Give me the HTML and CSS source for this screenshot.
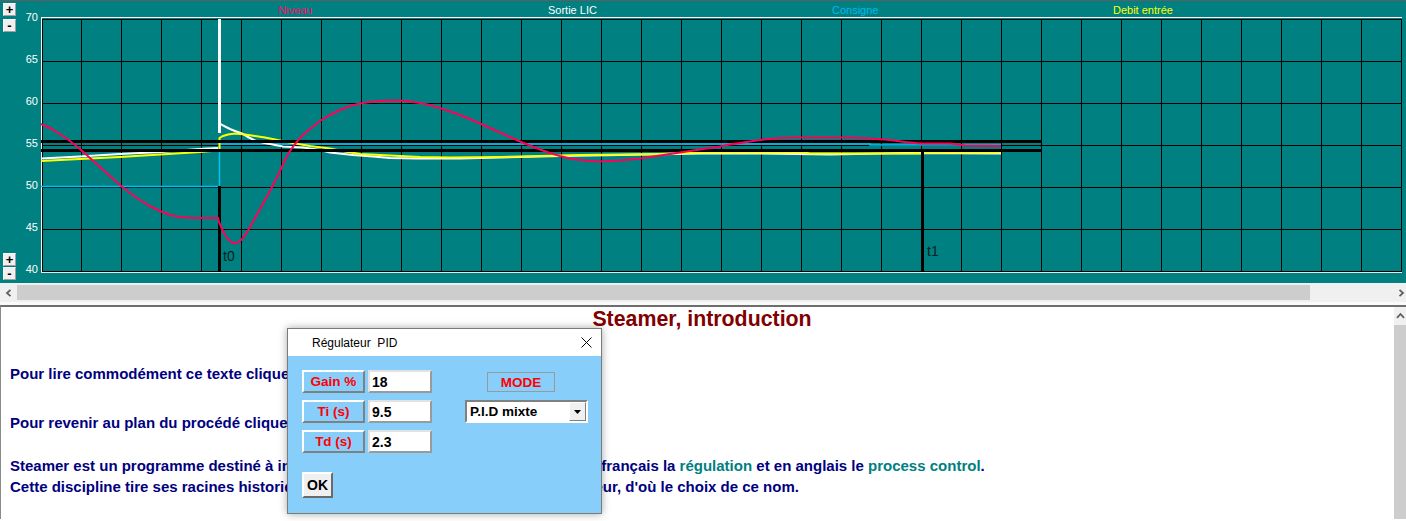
FILE: index.html
```html
<!DOCTYPE html>
<html lang="fr">
<head>
<meta charset="utf-8">
<title>Steamer</title>
<link rel="stylesheet" href="styles.css">
</head>
<body>
<div class="app">
  <div class="chart">
    <svg class="plot" width="1406" height="283" viewBox="0 0 1406 283">
      <defs>
        <pattern id="grid" patternUnits="userSpaceOnUse" x="41" y="19" width="40" height="42">
          <path d="M0.5 0V42M0 0.5H40" stroke="#000" stroke-width="1" fill="none"/>
        </pattern>
      </defs>
      <rect x="0" y="0" width="1406" height="1" fill="#5f5f5f"/>
      <rect x="41" y="19" width="1361" height="253" fill="url(#grid)"/>
      <rect x="41" y="17" width="1361" height="1" fill="#ffffff"/>
      <rect x="41" y="17" width="1" height="256" fill="#ffffff"/>
      <rect x="42" y="19" width="1" height="253" fill="#000"/>
      <rect x="41" y="272" width="1361" height="1" fill="#e8e8e8"/>

      <text class="ylab" x="38" y="21">70</text>
      <text class="ylab" x="38" y="63">65</text>
      <text class="ylab" x="38" y="105">60</text>
      <text class="ylab" x="38" y="147">55</text>
      <text class="ylab" x="38" y="189">50</text>
      <text class="ylab" x="38" y="231">45</text>
      <text class="ylab" x="38" y="273">40</text>

      <text class="leg leg-niveau" x="278" y="14">Niveau</text>
      <text class="leg leg-sortie" x="548" y="14">Sortie LIC</text>
      <text class="leg leg-consigne" x="832" y="14">Consigne</text>
      <text class="leg leg-debit" x="1113" y="14">Debit entrée</text>

      <!-- consigne -->
      <path d="M41 186.5H219.5V140" stroke="#00c0f8" stroke-width="1.5" fill="none"/>
      <path d="M219 144H870V145H1001" stroke="#00c0f8" stroke-width="1.5" fill="none"/>

      <!-- sortie LIC (white) -->
      <rect x="218" y="19" width="3" height="114" fill="#ffffff"/>
      <polyline fill="none" stroke="#ffffff" stroke-width="2" points="41,158.5 80,156.5 120,154 160,152 199,149 218,148"/>
      <polyline fill="none" stroke="#ffffff" stroke-width="2" points="219.5,123 222,125 226,127 230,129 235,131 242,133.5 248,137 256,141 267,143.5 283,146.5 303,147.5 320,150 330,152.5 353,155 373,156.5 390,158 417,158.5 460,158.5 500,157.5 560,156 620,155 700,153.5 760,153.5 830,154.5 905,153 1001,153.5"/>

      <!-- debit entree (yellow) -->
      <polyline fill="none" stroke="#ffff00" stroke-width="2" points="41,161 80,159 120,157 160,154.5 200,152 218,150.5 219.5,150.5 219.5,138 223,136 228,134.5 235,133.5 245,134.5 255,136 265,137.5 275,139.5 285,141.5 295,143.5 310,146 330,148.5 345,151.5 360,154 380,155 400,156 420,157 450,157.5 500,157 540,156 580,155 620,154.5 660,154 700,152.5 805,152.5 810,153.5 905,153.5 922,153.5 924,152.5 1001,152.5"/>

      <!-- markers -->
      <rect x="41" y="140" width="1001" height="3" fill="#000"/>
      <rect x="41" y="149" width="1001" height="3" fill="#000"/>
      <rect x="218" y="186" width="3" height="86" fill="#000"/>
      <rect x="921" y="152" width="3" height="120" fill="#000"/>
      <text class="tlab" x="223" y="261">t0</text>
      <text class="tlab" x="927" y="256">t1</text>

      <!-- niveau -->
      <polyline fill="none" stroke="#ff0058" stroke-width="2" points="41,124 50,128 60,134 70,141 80,149 90,158 100,167 110,176 120,185 130,193 140,200 150,206 160,211 170,215 180,217 195,218 218,218 219,222 222,229 225,235 229,240 233,243 238,242.5 242,239 246,234 250,227 255,218 260,209 265,200 270,191 275,181 280,171 285,160 290,151 295,144 300,138 305,133 310,129 320,121 330,115 340,110 350,106 360,103.5 370,102 380,101 390,100.5 400,100.5 410,101.5 420,103 430,105 440,108 450,111.5 460,115 470,119 480,123.5 490,128 500,132.5 510,137 520,141.5 530,145.5 540,149.5 550,153 560,156 570,158.5 580,160 590,161 600,161.5 610,161 620,160.5 630,159.5 640,158.5 650,157 660,155.5 670,154 680,152.5 690,151 700,149.5 710,148 720,146.5 730,144.5 740,143 750,141.5 760,140 770,139 780,138 795,137.5 850,137.5 870,138.5 890,140 905,142 920,143.5 950,143.5 965,145.5 1001,146"/>
    </svg>
    <div class="zoom-group zoom-top">
      <span class="zbtn">+</span>
      <span class="zbtn">-</span>
    </div>
    <div class="zoom-group zoom-bottom">
      <span class="zbtn">+</span>
      <span class="zbtn">-</span>
    </div>
  </div>

  <div class="hscroll">
    <div class="sb-arrow sb-left">
      <svg width="7" height="8" viewBox="0 0 7 8"><path d="M5.5 0.8L2 4L5.5 7.2" stroke="#606060" stroke-width="1.8" fill="none"/></svg>
    </div>
    <div class="sb-track"><div class="sb-thumb"></div></div>
    <div class="sb-arrow sb-right">
      <svg width="7" height="8" viewBox="0 0 7 8"><path d="M1.5 0.8L5 4L1.5 7.2" stroke="#606060" stroke-width="1.8" fill="none"/></svg>
    </div>
  </div>
  <div class="sep"></div>

  <div class="content">
    <div class="doc">
      <h1 class="title">Steamer, introduction</h1>
      <p class="para p-first">Pour lire commodément ce texte cliquez sur le bouton Agrandir.</p>
      <p class="para p-second">Pour revenir au plan du procédé cliquez sur le bouton Retour.</p>
      <p class="para p-third">Steamer est un programme destiné à initier à l'automatique, discipline nommée en français la <span class="hl">régulation</span> et en anglais le <span class="hl">process control</span>.<br>Cette discipline tire ses racines historiques au 19e siècle avec les machines à vapeur, d'où le choix de ce nom.</p>
    </div>
    <div class="vscroll">
      <div class="vs-arrow">
        <svg width="9" height="7" viewBox="0 0 9 7"><path d="M1 5.8L4.5 2L8 5.8" stroke="#606060" stroke-width="1.8" fill="none"/></svg>
      </div>
      <div class="vs-thumb"></div>
    </div>
  </div>

  <div class="dialog">
    <div class="dlg-title">
      <span class="dlg-caption">Régulateur  PID</span>
      <svg class="dlg-close" width="11" height="11" viewBox="0 0 11 11"><path d="M0.5 0.5L10.5 10.5M10.5 0.5L0.5 10.5" stroke="#000" stroke-width="1" fill="none"/></svg>
    </div>
    <div class="dlg-body">
      <div class="dlg-main">
        <div class="params">
          <span class="pbtn">Gain %</span><span class="field">18</span>
          <span class="pbtn">Ti (s)</span><span class="field">9.5</span>
          <span class="pbtn">Td (s)</span><span class="field">2.3</span>
        </div>
        <div class="mode">
          <div class="mode-label">MODE</div>
          <div class="select">
            <span class="select-val">P.I.D mixte</span>
            <span class="select-btn"><svg width="7" height="4" viewBox="0 0 7 4"><path d="M0 0H7L3.5 4Z" fill="#000"/></svg></span>
          </div>
        </div>
      </div>
      <span class="ok">OK</span>
    </div>
  </div>
</div>
</body>
</html>
```

FILE: styles.css
```css
* { box-sizing: border-box; }
html, body { margin: 0; padding: 0; }
body {
  width: 1406px;
  height: 521px;
  overflow: hidden;
  background: #ffffff;
  font-family: "Liberation Sans", Arial, sans-serif;
}
.app {
  position: relative;
  width: 1406px;
  height: 521px;
  display: flex;
  flex-direction: column;
}

/* chart */
.chart {
  position: relative;
  flex: none;
  height: 283px;
  background: #008080;
}
.plot { display: block; }
.ylab {
  font-family: "Liberation Sans", Arial, sans-serif;
  font-size: 11px;
  fill: #ffffff;
  text-anchor: end;
}
.leg {
  font-family: "Liberation Sans", Arial, sans-serif;
  font-size: 11px;
}
.leg-niveau { fill: #f0106a; }
.leg-sortie { fill: #ffffff; }
.leg-consigne { fill: #00b8f0; }
.leg-debit { fill: #ffff00; }
.tlab {
  font-family: "Liberation Sans", Arial, sans-serif;
  font-size: 14px;
  fill: #062222;
}
.zoom-group {
  position: absolute;
  left: 3px;
  display: flex;
  flex-direction: column;
}
.zoom-top { top: 3px; gap: 3px; }
.zoom-bottom { top: 253px; gap: 1px; }
.zbtn {
  width: 13px;
  height: 13px;
  display: flex;
  align-items: center;
  justify-content: center;
  background: #f0f0f0;
  border-top: 1px solid #ffffff;
  border-left: 1px solid #ffffff;
  border-right: 1px solid #a0a0a0;
  border-bottom: 1px solid #a0a0a0;
  font-size: 13px;
  font-weight: bold;
  line-height: 1;
  color: #000;
}

/* horizontal scrollbar */
.hscroll {
  flex: none;
  height: 17px;
  display: flex;
  background: #f0f0f0;
  padding-top: 2px;
}
.sb-arrow {
  display: flex;
  align-items: center;
}
.sb-left { width: 17px; justify-content: center; }
.sb-right { width: 13px; padding-left: 5px; }
.sb-track { flex: 1; }
.sb-thumb {
  width: 1293px;
  height: 15px;
  background: #cdcdcd;
}
.sep {
  flex: none;
  height: 5px;
  background: #fafafa;
  border-top: 2px solid #f0f0f0;
}

/* document */
.content {
  flex: none;
  height: 214px;
  display: flex;
  border-top: 2px solid #6e6e6e;
  border-left: 1px solid #8a8a8a;
  overflow: hidden;
}
.doc {
  flex: 1;
  padding-left: 9px;
  overflow: hidden;
}
.title {
  margin: 0;
  padding-top: 2px;
  font-size: 21.33px;
  line-height: 20px;
  font-weight: bold;
  color: #800000;
  text-align: center;
}
.para {
  margin: 0;
  font-size: 15px;
  line-height: 21px;
  font-weight: bold;
  color: #000080;
  white-space: nowrap;
}
.p-first { margin-top: 34px; }
.p-second { margin-top: 28px; }
.p-third { margin-top: 22px; }
.hl { color: #008080; }
.vscroll {
  flex: none;
  width: 12px;
  display: flex;
  flex-direction: column;
  background: #f0f0f0;
}
.vs-arrow {
  height: 17px;
  display: flex;
  align-items: center;
  padding-left: 2px;
}
.vs-thumb {
  flex: 1;
  margin-top: 1px;
  background: #cdcdcd;
}

/* dialog */
.dialog {
  position: absolute;
  left: 287px;
  top: 328px;
  width: 315px;
  height: 186px;
  border: 1px solid #7a7a7a;
  background: #87cefa;
  box-shadow: 0 0 8px rgba(0, 0, 0, 0.35);
  display: flex;
  flex-direction: column;
}
.dlg-title {
  height: 27px;
  flex: none;
  background: #ffffff;
  display: flex;
  align-items: center;
  justify-content: space-between;
  padding-left: 24px;
  padding-right: 9px;
}
.dlg-caption {
  font-size: 12px;
  color: #000;
  white-space: pre;
}
.dlg-body {
  padding: 14px 0 0 14px;
  display: flex;
  flex-direction: column;
  align-items: flex-start;
}
.dlg-main { display: flex; }
.params {
  display: grid;
  grid-template-columns: 63px 64px;
  grid-auto-rows: 23px;
  column-gap: 3px;
  row-gap: 7px;
}
.pbtn {
  display: flex;
  align-items: center;
  justify-content: center;
  border: 2px solid;
  border-color: #ffffff #808080 #808080 #ffffff;
  color: #ff0000;
  font-size: 13.5px;
  font-weight: bold;
}
.field {
  display: flex;
  align-items: center;
  padding-left: 2px;
  background: #ffffff;
  border: 2px solid;
  border-color: #e2e2e2 #9a9a9a #9a9a9a #e2e2e2;
  color: #000;
  font-size: 14px;
  font-weight: bold;
}
.mode {
  margin-left: 33px;
  width: 123px;
  display: flex;
  flex-direction: column;
}
.mode-label {
  margin-top: 2px;
  margin-left: 22px;
  width: 68px;
  height: 20px;
  border: 1px solid #9a9a9a;
  display: flex;
  align-items: center;
  justify-content: center;
  color: #ff0000;
  font-size: 13.5px;
  font-weight: bold;
}
.select {
  margin-top: 8px;
  height: 23px;
  display: flex;
  background: #ffffff;
  border: 2px solid;
  border-color: #808080 #ffffff #ffffff #808080;
}
.select-val {
  flex: 1;
  display: flex;
  align-items: center;
  padding-left: 3px;
  font-size: 13.5px;
  font-weight: bold;
  color: #000;
}
.select-btn {
  width: 17px;
  display: flex;
  align-items: center;
  justify-content: center;
  background: #f0f0f0;
  border: 1px solid;
  border-color: #ffffff #808080 #808080 #ffffff;
}
.ok {
  margin-top: 19px;
  width: 31px;
  height: 26px;
  display: flex;
  align-items: center;
  justify-content: center;
  background: #f0f0f0;
  border: 2px solid;
  border-color: #ffffff #6a6a6a #6a6a6a #ffffff;
  font-size: 14px;
  font-weight: bold;
  color: #000;
}
```
